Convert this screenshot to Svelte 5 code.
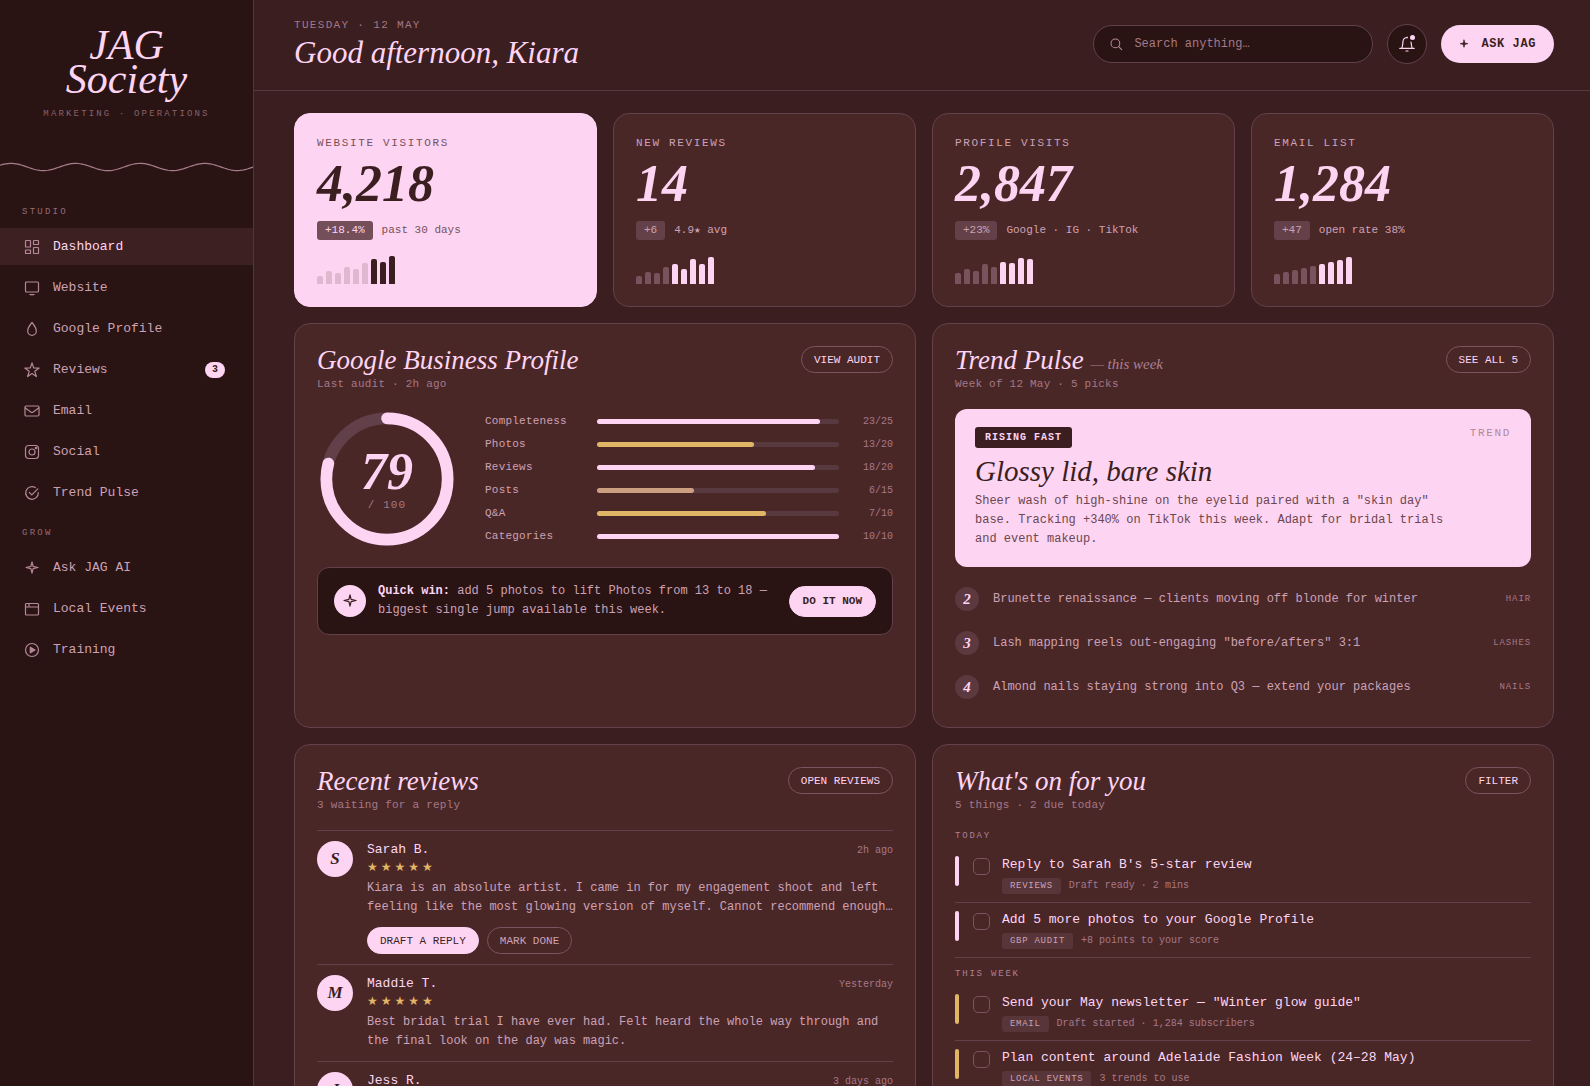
<script lang="ts">
  type NavItem = { icon: string; label: string; badge?: number; active?: boolean };

  const nav: { title: string; items: NavItem[] }[] = [
    {
      title: 'Studio',
      items: [
        { icon: 'dashboard', label: 'Dashboard', active: true },
        { icon: 'website', label: 'Website' },
        { icon: 'drop', label: 'Google Profile' },
        { icon: 'star', label: 'Reviews', badge: 3 },
        { icon: 'mail', label: 'Email' },
        { icon: 'social', label: 'Social' },
        { icon: 'pulse', label: 'Trend Pulse' }
      ]
    },
    {
      title: 'Grow',
      items: [
        { icon: 'spark', label: 'Ask JAG AI' },
        { icon: 'events', label: 'Local Events' },
        { icon: 'play', label: 'Training' }
      ]
    }
  ];

  const kpis = [
    { label: 'Website visitors', value: '4,218', delta: '+18.4%', note: 'past 30 days', bars: [8, 13, 11, 17, 15, 21, 25, 22, 28], hot: 6, featured: true },
    { label: 'New reviews', value: '14', delta: '+6', note: '4.9★ avg', bars: [8, 12, 11, 17, 20, 15, 25, 20, 27], hot: 4 },
    { label: 'Profile visits', value: '2,847', delta: '+23%', note: 'Google · IG · TikTok', bars: [11, 15, 13, 20, 17, 22, 21, 26, 25], hot: 5 },
    { label: 'Email list', value: '1,284', delta: '+47', note: 'open rate 38%', bars: [10, 12, 14, 16, 18, 20, 22, 24, 27], hot: 5 }
  ];

  const scores = [
    { label: 'Completeness', got: 23, max: 25, tone: 'pink' },
    { label: 'Photos', got: 13, max: 20, tone: 'gold' },
    { label: 'Reviews', got: 18, max: 20, tone: 'pink' },
    { label: 'Posts', got: 6, max: 15, tone: 'tan' },
    { label: 'Q&A', got: 7, max: 10, tone: 'gold' },
    { label: 'Categories', got: 10, max: 10, tone: 'pink' }
  ];

  const trends = [
    { rank: 2, text: 'Brunette renaissance — clients moving off blonde for winter', tag: 'Hair' },
    { rank: 3, text: 'Lash mapping reels out-engaging "before/afters" 3:1', tag: 'Lashes' },
    { rank: 4, text: 'Almond nails staying strong into Q3 — extend your packages', tag: 'Nails' }
  ];

  const reviews = [
    {
      name: 'Sarah B.',
      when: '2h ago',
      text: 'Kiara is an absolute artist. I came in for my engagement shoot and left feeling like the most glowing version of myself. Cannot recommend enough…',
      actions: true
    },
    {
      name: 'Maddie T.',
      when: 'Yesterday',
      text: 'Best bridal trial I have ever had. Felt heard the whole way through and the final look on the day was magic.'
    },
    { name: 'Jess R.', when: '3 days ago', text: '' }
  ];

  const agenda = [
    {
      title: 'Today',
      tone: 'pink',
      tasks: [
        { title: "Reply to Sarah B's 5-star review", tag: 'Reviews', note: 'Draft ready · 2 mins' },
        { title: 'Add 5 more photos to your Google Profile', tag: 'GBP audit', note: '+8 points to your score' }
      ]
    },
    {
      title: 'This week',
      tone: 'gold',
      tasks: [
        { title: 'Send your May newsletter — "Winter glow guide"', tag: 'Email', note: 'Draft started · 1,284 subscribers' },
        { title: 'Plan content around Adelaide Fashion Week (24–28 May)', tag: 'Local events', note: '3 trends to use' }
      ]
    }
  ];

  const score = 79;
  const ring = 2 * Math.PI * 52;

  // sine line under the brand, drawn a little past the sidebar edge
  const wave = Array.from({ length: 131 }, (_, i) => {
    const x = i * 2;
    const y = 7 - 3.6 * Math.cos((2 * Math.PI * (x - 11)) / 64.6);
    return `${i ? 'L' : 'M'}${x} ${y.toFixed(2)}`;
  }).join('');
</script>

{#snippet icon(name: string)}
  <svg class="icon" viewBox="0 0 16 16" aria-hidden="true">
    {#if name === 'dashboard'}
      <rect x="1.5" y="1.5" width="5" height="6.5" rx="0.6" />
      <rect x="9.5" y="1.5" width="5" height="4" rx="0.6" />
      <rect x="1.5" y="11" width="5" height="3.5" rx="0.6" />
      <rect x="9.5" y="8.5" width="5" height="6" rx="0.6" />
    {:else if name === 'website'}
      <rect x="1.5" y="2" width="13" height="10" rx="1" />
      <path d="M6 14.7h4" />
    {:else if name === 'drop'}
      <path d="M8 1.5C8 1.5 3.7 6.7 3.7 9.9a4.3 4.4 0 0 0 8.6 0C12.3 6.7 8 1.5 8 1.5z" />
    {:else if name === 'star'}
      <path d="M8 .9l1.7 5.1 5.5.1-4.4 3.2 1.6 5.3L8 11.5l-4.4 3.1 1.6-5.3L.8 6.1l5.5-.1z" />
    {:else if name === 'mail'}
      <rect x="1" y="3" width="14" height="10" rx="1.2" />
      <path d="M1.3 5l5.5 4q1.2.8 2.4 0l5.5-4" />
    {:else if name === 'social'}
      <rect x="1.5" y="1.5" width="13" height="13" rx="3" />
      <circle cx="8" cy="8" r="3" />
      <circle class="solid" cx="12" cy="4" r=".7" />
    {:else if name === 'pulse'}
      <path d="M14.3 7.7A6.3 6.3 0 1 1 11.3 2.6" />
      <path d="M5.3 7.3l2.5 2.5 6-6" />
    {:else if name === 'spark'}
      <path d="M8 1.8l1.1 4.6 4.9 1.1-4.9 1.1L8 13.2 6.900 8.600 2 7.500l4.900-1.100z" />
    {:else if name === 'events'}
      <rect x="1.5" y="2.5" width="13" height="11.5" rx="1" />
      <path d="M1.5 6h13M5 2.5V5" />
    {:else if name === 'play'}
      <circle cx="8" cy="8" r="6.5" />
      <path class="solid" d="M6.3 5.2v5.6L11 8z" />
    {:else if name === 'search'}
      <circle cx="7.3" cy="7.3" r="5" />
      <path d="M11 11l3.5 3.5" />
    {:else if name === 'bell'}
      <path d="M.8 12.4h14.4M2.5 12.4C3.8 11 3.6 8 4 5.5A4 4 0 0 1 12 5.5C12.4 8 12.2 11 13.5 12.4M8 1v.6M7 15h2" />
    {/if}
  </svg>
{/snippet}

<div class="shell">
  <aside>
    <div class="brand">
      <strong>JAG<br />Society</strong>
      <span>Marketing · Operations</span>
    </div>
    <svg class="wave" aria-hidden="true"><path d={wave} /></svg>
    <nav>
      {#each nav as group}
        <h2>{group.title}</h2>
        <ul>
          {#each group.items as item}
            <li>
              <a href="#top" class:active={item.active}>
                {@render icon(item.icon)}
                <span>{item.label}</span>
                {#if item.badge}<em>{item.badge}</em>{/if}
              </a>
            </li>
          {/each}
        </ul>
      {/each}
    </nav>
  </aside>

  <main>
    <header class="topbar">
      <div class="greeting">
        <p>Tuesday · 12 May</p>
        <h1>Good afternoon, Kiara</h1>
      </div>
      <label class="search">
        {@render icon('search')}
        <input type="text" placeholder="Search anything…" aria-label="Search" />
      </label>
      <button class="bell" aria-label="Notifications">{@render icon('bell')}<i></i></button>
      <button class="ask">{@render icon('spark')}Ask JAG</button>
    </header>

    <div class="content">
      <section class="kpis">
        {#each kpis as kpi}
          <article class="card kpi" class:featured={kpi.featured}>
            <h3>{kpi.label}</h3>
            <strong>{kpi.value}</strong>
            <p><b>{kpi.delta}</b><span>{kpi.note}</span></p>
            <div class="bars">
              {#each kpi.bars as h, i}
                <i class:hot={i >= kpi.hot} style="height: {h}px"></i>
              {/each}
            </div>
          </article>
        {/each}
      </section>

      <section class="panels">
        <article class="card">
          <header class="head">
            <div>
              <h2>Google Business Profile</h2>
              <p>Last audit · 2h ago</p>
            </div>
            <button class="pill">View audit</button>
          </header>
          <div class="audit">
            <div class="ring">
              <svg viewBox="0 0 120 120" aria-hidden="true">
                <circle class="track" cx="60" cy="60" r="52" />
                <circle class="value" cx="60" cy="60" r="52" stroke-dasharray="{(ring * score) / 100} {ring}" transform="rotate(-90 60 60)" />
              </svg>
              <div class="ring-text"><strong>{score}</strong><span>/ 100</span></div>
            </div>
            <ul class="scores">
              {#each scores as s}
                <li>
                  <span>{s.label}</span>
                  <div class="meter"><i class={s.tone} style="width: {(s.got / s.max) * 100}%"></i></div>
                  <b>{s.got}/{s.max}</b>
                </li>
              {/each}
            </ul>
          </div>
          <div class="quick">
            <span class="dot">{@render icon('spark')}</span>
            <p><b>Quick win:</b> add 5 photos to lift Photos from 13 to 18 — biggest single jump available this week.</p>
            <button class="pill solid large">Do it now</button>
          </div>
        </article>

        <article class="card">
          <header class="head">
            <div>
              <h2>Trend Pulse <small>— this week</small></h2>
              <p>Week of 12 May · 5 picks</p>
            </div>
            <button class="pill">See all 5</button>
          </header>
          <div class="feature">
            <div class="feature-top"><b>Rising fast</b><span>Trend</span></div>
            <h3>Glossy lid, bare skin</h3>
            <p>Sheer wash of high-shine on the eyelid paired with a "skin day" base. Tracking +340% on TikTok this week. Adapt for bridal trials and event makeup.</p>
          </div>
          <ol class="trends">
            {#each trends as t}
              <li><i>{t.rank}</i><span>{t.text}</span><b>{t.tag}</b></li>
            {/each}
          </ol>
        </article>

        <article class="card">
          <header class="head">
            <div>
              <h2>Recent reviews</h2>
              <p>3 waiting for a reply</p>
            </div>
            <button class="pill">Open reviews</button>
          </header>
          {#each reviews as r}
            <div class="review">
              <span class="avatar">{r.name[0]}</span>
              <div class="review-body">
                <div class="review-top"><b>{r.name}</b><time>{r.when}</time></div>
                <div class="stars" role="img" aria-label="5 stars">★★★★★</div>
                <p>{r.text}</p>
                {#if r.actions}
                  <div class="actions">
                    <button class="pill solid">Draft a reply</button>
                    <button class="pill quiet">Mark done</button>
                  </div>
                {/if}
              </div>
            </div>
          {/each}
        </article>

        <article class="card">
          <header class="head">
            <div>
              <h2>What's on for you</h2>
              <p>5 things · 2 due today</p>
            </div>
            <button class="pill">Filter</button>
          </header>
          {#each agenda as group}
            <h4>{group.title}</h4>
            {#each group.tasks as task}
              <label class="task">
                <i class={group.tone}></i>
                <input type="checkbox" />
                <span class="task-body">
                  <b>{task.title}</b>
                  <span class="task-meta"><em>{task.tag}</em>{task.note}</span>
                </span>
              </label>
            {/each}
          {/each}
        </article>
      </section>
    </div>
  </main>
</div>

<style>
  :global(body) {
    background: #3b1e20;
  }

  .shell {
    --ink: #291413;
    --base: #3b1e20;
    --card: #4a2727;
    --line: #63404a;
    --pink: #fdd5f3;
    --mid: #cda1b5;
    --soft: #b58899;
    --dim: #a57887;
    --chip: #5b393e;
    --gold: #e0b565;
    --serif: 'Liberation Serif', 'Times New Roman', serif;
    display: grid;
    grid-template-columns: 254px minmax(0, 1fr);
    height: 100vh;
    background: var(--base);
    color: var(--pink);
    font-family: 'Liberation Mono', 'Courier New', monospace;
    font-size: 12px;
  }

  .shell * {
    box-sizing: border-box;
  }

  h1, h2, h3, h4, p, ul, ol {
    margin: 0;
    padding: 0;
    list-style: none;
    font-weight: 400;
  }

  em, i {
    font-style: normal;
  }

  button, input {
    font: inherit;
    color: inherit;
  }

  button {
    border: 0;
    text-transform: uppercase;
    cursor: pointer;
    white-space: nowrap;
  }

  .icon {
    flex: none;
    width: 16px;
    height: 16px;
    fill: none;
    stroke: currentColor;
    stroke-width: 1.2;
    stroke-linejoin: round;
    stroke-linecap: round;
  }

  .icon .solid {
    fill: currentColor;
  }

  aside,
  main {
    min-height: 0;
    overflow-y: auto;
    scrollbar-width: none;
  }

  aside {
    background: var(--ink);
    border-right: 1px solid #53353a;
    padding-top: 28px;
  }

  .brand {
    text-align: center;
  }

  .brand strong {
    display: block;
    font: italic 400 42px/34px var(--serif);
  }

  .brand span {
    display: block;
    margin-top: 12px;
    font-size: 9px;
    line-height: 12px;
    letter-spacing: 0.24em;
    text-transform: uppercase;
    color: #8a606c;
  }

  .wave {
    display: block;
    width: 100%;
    height: 14px;
    margin: 40px 0 32px;
  }

  .wave path {
    fill: none;
    stroke: #a97c8c;
    stroke-width: 1.2;
  }

  nav h2 {
    padding: 0 22px;
    margin-bottom: 10px;
    font-size: 9px;
    line-height: 12px;
    letter-spacing: 0.25em;
    text-transform: uppercase;
    color: #976b78;
  }

  nav ul {
    display: grid;
    gap: 4px;
    margin-bottom: 16px;
  }

  nav a {
    display: flex;
    align-items: center;
    gap: 13px;
    height: 37px;
    padding: 0 28px 0 24px;
    font-size: 13px;
    color: var(--mid);
    text-decoration: none;
  }

  nav a .icon {
    color: var(--soft);
  }

  nav a.active {
    background: #3d2021;
    color: var(--pink);
  }

  nav em {
    margin-left: auto;
    width: 20px;
    border-radius: 8px;
    background: var(--pink);
    color: var(--base);
    font-size: 10px;
    font-weight: 700;
    line-height: 16px;
    text-align: center;
  }

  .topbar {
    display: flex;
    align-items: center;
    gap: 14px;
    padding: 18px 36px 20px 40px;
    border-bottom: 1px solid #5a383e;
  }

  .greeting {
    flex: 1;
  }

  .greeting p {
    font-size: 11px;
    line-height: 14px;
    letter-spacing: 0.12em;
    text-transform: uppercase;
    color: var(--dim);
  }

  h1 {
    margin-top: 4px;
    font: italic 400 31px/34px var(--serif);
  }

  .search {
    display: flex;
    align-items: center;
    gap: 11px;
    width: 280px;
    height: 38px;
    padding: 0 16px 0 15px;
    border: 1px solid var(--line);
    border-radius: 19px;
    background: var(--ink);
    color: var(--soft);
  }

  .search .icon {
    width: 14px;
    height: 14px;
  }

  .search input {
    flex: 1;
    min-width: 0;
    padding: 0;
    border: 0;
    outline: 0;
    background: none;
  }

  .search input::placeholder {
    color: var(--dim);
    opacity: 1;
  }

  .bell {
    position: relative;
    display: grid;
    place-items: center;
    width: 40px;
    height: 40px;
    padding: 0;
    border: 1px solid var(--line);
    border-radius: 50%;
    background: var(--ink);
  }

  .bell i {
    position: absolute;
    top: 10px;
    right: 11px;
    width: 5px;
    height: 5px;
    border-radius: 50%;
    background: var(--pink);
    box-shadow: 0 0 0 2px var(--ink);
  }

  .ask {
    display: flex;
    align-items: center;
    gap: 12px;
    height: 38px;
    padding: 0 18px;
    border-radius: 19px;
    background: var(--pink);
    color: var(--base);
    font-weight: 700;
    letter-spacing: 0.05em;
  }

  .ask .icon {
    width: 10px;
    height: 10px;
    fill: currentColor;
  }

  .content {
    display: grid;
    gap: 16px;
    padding: 22px 36px 22px 40px;
  }

  .kpis {
    display: grid;
    grid-template-columns: repeat(4, minmax(0, 1fr));
    gap: 16px;
  }

  .panels {
    display: grid;
    grid-template-columns: repeat(2, minmax(0, 1fr));
    gap: 16px;
  }

  .card {
    padding: 22px;
    border: 1px solid var(--line);
    border-radius: 16px;
    background: var(--card);
  }

  .kpi h3 {
    font-size: 11px;
    line-height: 14px;
    letter-spacing: 0.15em;
    text-transform: uppercase;
    color: var(--mid);
  }

  .kpi strong {
    display: block;
    margin: 8px 0 11px;
    font: italic 700 52px/52px var(--serif);
  }

  .kpi p {
    display: flex;
    align-items: center;
    gap: 9px;
    margin-bottom: 16px;
    font-size: 11px;
    line-height: 19px;
    color: var(--mid);
  }

  .kpi b {
    padding: 0 8px;
    border-radius: 3px;
    background: #644149;
    font-weight: 400;
  }

  .bars {
    display: flex;
    align-items: flex-end;
    gap: 3px;
    height: 28px;
  }

  .bars i {
    width: 6px;
    border-radius: 2px 2px 0 0;
    background: #78535d;
  }

  .bars .hot {
    background: var(--pink);
  }

  .featured {
    border-color: var(--pink);
    background: var(--pink);
    color: var(--base);
  }

  .featured h3,
  .featured p {
    color: #77505b;
  }

  .featured b {
    background: #744e58;
    color: var(--pink);
  }

  .featured .bars i {
    background: #dfb7cf;
  }

  .featured .bars .hot {
    background: var(--base);
  }

  .head {
    display: flex;
    align-items: flex-start;
    justify-content: space-between;
    height: 63px;
  }

  .head h2 {
    font: italic 400 27px/28px var(--serif);
  }

  .head small {
    font-size: 15px;
    line-height: 16px;
    color: #ad8092;
  }

  .head p {
    margin-top: 2px;
    font-size: 11px;
    line-height: 16px;
    letter-spacing: 0.02em;
    color: var(--dim);
  }

  .pill {
    height: 27px;
    padding: 0 12px;
    border: 1px solid #7a545f;
    border-radius: 16px;
    background: transparent;
    font-size: 11px;
  }

  .pill.solid {
    border-color: var(--pink);
    background: var(--pink);
    color: var(--base);
  }

  .pill.quiet {
    color: var(--mid);
  }

  .pill.large {
    height: 31px;
    padding: 0 13px;
    font-weight: 700;
  }

  .audit {
    display: flex;
    align-items: center;
    gap: 28px;
  }

  .ring {
    position: relative;
    flex: none;
    width: 140px;
    height: 140px;
  }

  .ring svg {
    display: block;
  }

  .ring circle {
    fill: none;
    stroke-width: 10;
    stroke-linecap: round;
  }

  .ring .track {
    stroke: #62404a;
  }

  .ring .value {
    stroke: var(--pink);
  }

  .ring-text {
    position: absolute;
    inset: 0;
    display: flex;
    flex-direction: column;
    align-items: center;
    justify-content: center;
  }

  .ring-text strong {
    font: italic 700 52px/52px var(--serif);
  }

  .ring-text span {
    font-size: 11px;
    line-height: 14px;
    letter-spacing: 0.1em;
    color: var(--dim);
  }

  .scores {
    flex: 1;
    display: grid;
    gap: 10px;
  }

  .scores li {
    display: grid;
    grid-template-columns: 100px 1fr 42px;
    align-items: center;
    gap: 12px;
    font-size: 11px;
    line-height: 13px;
    letter-spacing: 0.02em;
    color: var(--mid);
  }

  .scores b {
    font-size: 10px;
    font-weight: 400;
    letter-spacing: 0;
    text-align: right;
    color: var(--dim);
  }

  .meter {
    height: 5px;
    border-radius: 3px;
    background: #593940;
  }

  .meter i {
    display: block;
    height: 100%;
    border-radius: 3px;
  }

  .pink {
    background: var(--pink);
  }

  .gold {
    background: var(--gold);
  }

  .tan {
    background: #cb9f80;
  }

  .quick {
    display: flex;
    align-items: center;
    gap: 12px;
    margin-top: 18px;
    padding: 14px 16px;
    border: 1px solid var(--line);
    border-radius: 12px;
    background: var(--ink);
  }

  .quick p {
    flex: 1;
    line-height: 19px;
    color: var(--mid);
  }

  .quick b {
    color: var(--pink);
  }

  .dot {
    display: grid;
    flex: none;
    place-items: center;
    width: 32px;
    height: 32px;
    border-radius: 50%;
    background: var(--pink);
    color: var(--base);
  }

  .feature {
    padding: 18px 20px;
    border-radius: 12px;
    background: var(--pink);
    color: var(--base);
  }

  .feature-top {
    display: flex;
    justify-content: space-between;
    font-size: 10px;
    text-transform: uppercase;
  }

  .feature-top b {
    padding: 0 10px;
    border-radius: 3px;
    background: var(--base);
    color: var(--pink);
    line-height: 21px;
    letter-spacing: 0.1em;
  }

  .feature-top span {
    font-size: 11px;
    line-height: 12px;
    letter-spacing: 0.15em;
    color: #b48898;
  }

  .feature h3 {
    margin: 8px 0 6px;
    font: italic 400 29px/30px var(--serif);
  }

  .feature p {
    max-width: 480px;
    line-height: 19px;
    color: #6c4650;
  }

  .trends {
    display: grid;
    gap: 8px;
    margin-top: 14px;
  }

  .trends li {
    display: flex;
    align-items: center;
    gap: 14px;
    height: 36px;
    color: var(--mid);
  }

  .trends i {
    width: 24px;
    border-radius: 50%;
    background: var(--chip);
    color: var(--pink);
    font: italic 700 15px/24px var(--serif);
    text-align: center;
  }

  .trends b {
    margin-left: auto;
    font-size: 9px;
    font-weight: 400;
    letter-spacing: 0.1em;
    text-transform: uppercase;
    color: var(--dim);
  }

  .review {
    display: flex;
    gap: 14px;
    padding: 10px 0;
    border-top: 1px solid var(--line);
  }

  .avatar {
    flex: none;
    width: 36px;
    height: 36px;
    border-radius: 50%;
    background: var(--pink);
    color: var(--base);
    font: italic 700 17px/36px var(--serif);
    text-align: center;
  }

  .review-body {
    flex: 1;
    min-width: 0;
  }

  .review-top {
    display: flex;
    align-items: baseline;
    justify-content: space-between;
    line-height: 18px;
  }

  .review-top b {
    font-size: 13px;
    font-weight: 400;
  }

  .review-top time {
    font-size: 10px;
    color: var(--dim);
  }

  .stars {
    margin-bottom: 4px;
    font-family: 'DejaVu Sans', sans-serif;
    font-size: 12px;
    line-height: 15px;
    letter-spacing: 3px;
    color: var(--gold);
  }

  .review p {
    line-height: 19px;
    color: var(--mid);
  }

  .actions {
    display: flex;
    gap: 8px;
    margin-top: 10px;
  }

  h4 {
    margin-bottom: 6px;
    font-size: 9px;
    line-height: 12px;
    letter-spacing: 0.2em;
    text-transform: uppercase;
    color: #ad8092;
  }

  .task + h4 {
    margin-top: 10px;
  }

  .task {
    display: flex;
    gap: 14px;
    padding: 8px 0;
    border-bottom: 1px solid var(--line);
  }

  .task > i {
    width: 4px;
    height: 30px;
    border-radius: 2px;
  }

  .task input {
    appearance: none;
    width: 17px;
    height: 17px;
    margin: 2px -2px 0 0;
    border: 1px solid #7a545f;
    border-radius: 5px;
  }

  .task b {
    display: block;
    margin-bottom: 4px;
    font-size: 13px;
    font-weight: 400;
    line-height: 18px;
  }

  .task-meta {
    display: flex;
    align-items: center;
    gap: 8px;
    font-size: 10px;
    line-height: 16px;
    color: var(--dim);
  }

  .task-meta em {
    padding: 0 8px;
    border-radius: 3px;
    background: #573539;
    color: var(--mid);
    font-size: 9px;
    letter-spacing: 0.08em;
    text-transform: uppercase;
  }
</style>
